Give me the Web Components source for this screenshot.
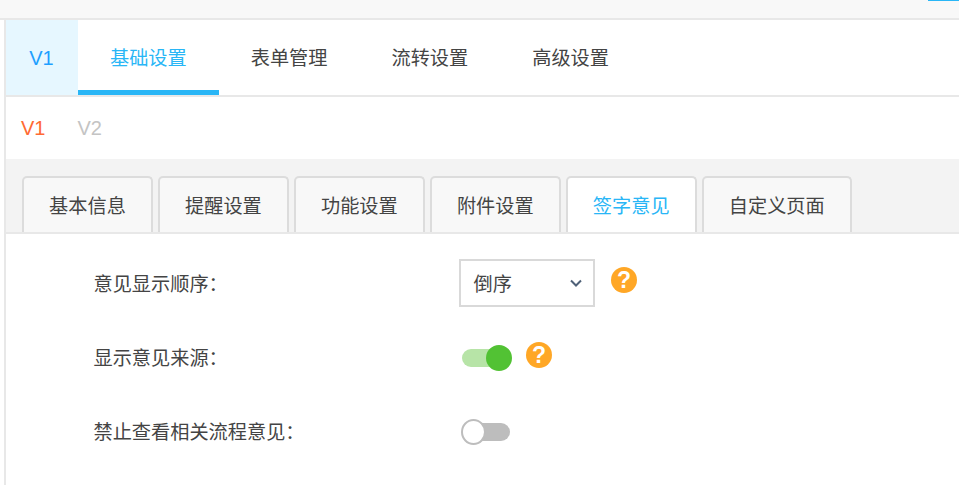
<!DOCTYPE html>
<html lang="zh">
<head>
<meta charset="utf-8">
<title>签字意见</title>
<style>
  html, body { margin: 0; padding: 0; background: #fff; overflow: hidden; }
  body { width: 959px; height: 485px; font-family: "Liberation Sans", "Noto Sans CJK SC", sans-serif; color: #444; }
</style>
</head>
<body>
<top-bar></top-bar>
<settings-panel>
  <main-nav version="V1" active="基础设置" items="基础设置,表单管理,流转设置,高级设置"></main-nav>
  <version-row></version-row>
  <page-tabs active="签字意见" items="基本信息,提醒设置,功能设置,附件设置,签字意见,自定义页面"></page-tabs>
  <form-row label="意见显示顺序：">
    <fake-select value="倒序"></fake-select>
    <help-icon style="margin:-6px 0 0 16px"></help-icon>
  </form-row>
  <form-row label="显示意见来源：">
    <toggle-switch on></toggle-switch>
    <help-icon style="margin:-4px 0 0 16px"></help-icon>
  </form-row>
  <form-row label="禁止查看相关流程意见：">
    <toggle-switch></toggle-switch>
  </form-row>
</settings-panel>

<script>
(function() {
  const CJK = '"Liberation Sans", "Noto Sans CJK SC", sans-serif'

  // small helper so each class stays short
  function shadow(el, html) {
    const root = el.attachShadow({ mode: 'open' })
    root.innerHTML = html
    return root
  }

  class TopBar extends HTMLElement {
    connectedCallback() {
      shadow(this, `
        <style>
          :host { display: flex; justify-content: flex-end; box-sizing: border-box; height: 20px; background: #f8f8f8; border-bottom: 2px solid #e8e8e8; }
          div { width: 31px; height: 1px; background: #29b6f6; }
        </style>
        <div></div>`)
    }
  }

  class SettingsPanel extends HTMLElement {
    connectedCallback() {
      shadow(this, `
        <style>
          :host { display: block; margin-left: 4px; border-left: 2px solid #e8e8e8; height: 465px; overflow: hidden; }
        </style>
        <slot></slot>`)
    }
  }

  class MainNav extends HTMLElement {
    connectedCallback() {
      const active = this.getAttribute('active')
      const items = this.getAttribute('items').split(',')
      const tabs = items.map(t => `<a class="${t === active ? 'on' : ''}">${t}</a>`).join('')
      shadow(this, `
        <style>
          :host { display: flex; box-sizing: border-box; height: 77px; border-bottom: 2px solid #e8e8e8; font: 19.2px ${CJK}; color: #444; }
          .ver { width: 72px; padding: 1px 1px 0 0; box-sizing: border-box; display: flex; align-items: center; justify-content: center; background: #e6f7ff; color: #1e9fff; font-size: 20px; }
          a { box-sizing: border-box; padding: 3px 32px 0; display: flex; align-items: center; border-bottom: 5px solid transparent; white-space: nowrap; }
          a.on { color: #29b6f6; border-bottom-color: #29b6f6; }
        </style>
        <div class="ver">${this.getAttribute('version')}</div>${tabs}`)
    }
  }

  class VersionRow extends HTMLElement {
    connectedCallback() {
      shadow(this, `
        <style>
          :host { display: flex; align-items: center; height: 62px; padding-left: 15px; gap: 32px; font: 20px ${CJK}; }
          .on { color: #ff6a33; }
          .off { color: #c4c4c4; }
        </style>
        <span class="on">V1</span><span class="off">V2</span>`)
    }
  }

  class PageTabs extends HTMLElement {
    connectedCallback() {
      const active = this.getAttribute('active')
      const items = this.getAttribute('items').split(',')
      const tabs = items.map(t => `<a class="${t === active ? 'on' : ''}">${t}</a>`).join('')
      shadow(this, `
        <style>
          :host { display: flex; gap: 5px; box-sizing: border-box; height: 75px; margin-bottom: 12px; padding: 17px 0 0 16px; background: #f3f3f3; border-bottom: 2px solid #e8e8e8; font: 19.2px ${CJK}; color: #444; }
          a { box-sizing: border-box; height: 56px; padding: 0 25.1px; display: flex; align-items: center; background: #f8f8f8; border: 2px solid #dcdcdc; border-bottom: 0; border-radius: 5px 5px 0 0; white-space: nowrap; }
          a.on { background: #fff; color: #29b6f6; }
        </style>
        ${tabs}`)
    }
  }

  class FormRow extends HTMLElement {
    connectedCallback() {
      shadow(this, `
        <style>
          :host { display: flex; align-items: center; height: 74px; font: 19.2px ${CJK}; color: #444; }
          label { box-sizing: border-box; width: 453px; padding-left: 87.5px; white-space: nowrap; }
          .body { display: flex; align-items: center; }
        </style>
        <label>${this.getAttribute('label')}</label>
        <div class="body"><slot></slot></div>`)
    }
  }

  class FakeSelect extends HTMLElement {
    connectedCallback() {
      shadow(this, `
        <style>
          :host { display: flex; align-items: center; justify-content: space-between; box-sizing: border-box; width: 136px; height: 48px; padding: 0 11px 0 12.5px; border: 2px solid #d9d9d9; background: #fff; font: 19.2px ${CJK}; color: #444; }
          svg { display: block; }
        </style>
        <span>${this.getAttribute('value')}</span>
        <svg width="12" height="8" viewBox="0 0 12 8"><path d="M1 1.5 L6 6.5 L11 1.5" fill="none" stroke="#4f6178" stroke-width="2"/></svg>`)
    }
  }

  class HelpIcon extends HTMLElement {
    connectedCallback() {
      shadow(this, `
        <style>
          :host { display: block; width: 26px; height: 26px; }
          svg { display: block; }
          text { font: bold 23px ${CJK}; fill: #fff; }
        </style>
        <svg width="26" height="26" viewBox="0 0 26 26">
          <circle cx="13" cy="13" r="13" fill="#ffa726"/>
          <text x="13" y="21" text-anchor="middle">?</text>
        </svg>`)
    }
  }

  class ToggleSwitch extends HTMLElement {
    connectedCallback() {
      shadow(this, `
        <style>
          :host { display: block; position: relative; width: 48px; height: 18px; margin: 2px 0 0 3px; border-radius: 9px; background: #bdbdbd; }
          :host([on]) { background: #b7e4a7; }
          i { position: absolute; top: -4px; left: -1px; box-sizing: border-box; width: 25px; height: 26px; border-radius: 50%; background: #fff; border: 2px solid #bdbdbd; }
          :host([on]) i { left: auto; right: -2px; width: 26px; background: #52c234; border-color: #52c234; }
        </style>
        <i></i>`)
    }
  }

  customElements.define('top-bar', TopBar)
  customElements.define('settings-panel', SettingsPanel)
  customElements.define('main-nav', MainNav)
  customElements.define('version-row', VersionRow)
  customElements.define('page-tabs', PageTabs)
  customElements.define('form-row', FormRow)
  customElements.define('fake-select', FakeSelect)
  customElements.define('help-icon', HelpIcon)
  customElements.define('toggle-switch', ToggleSwitch)
})()
</script>
</body>
</html>
